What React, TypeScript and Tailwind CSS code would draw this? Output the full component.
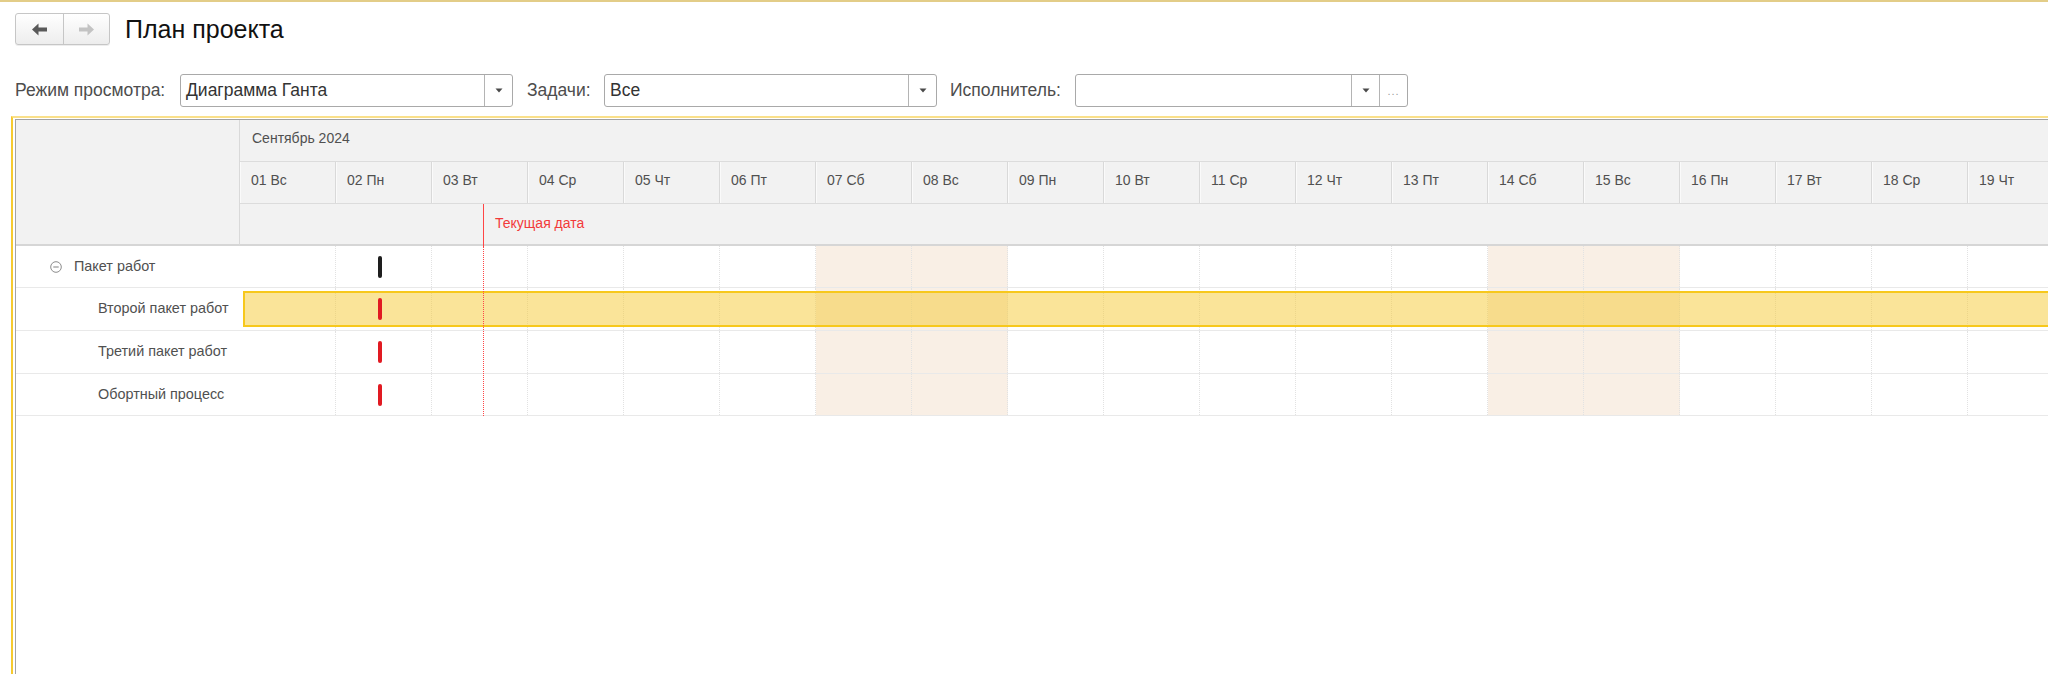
import React from "react";

type Day = { d: string; w: string; off?: boolean };

const days: Day[] = [
  { d: "01", w: "Вс" },
  { d: "02", w: "Пн" },
  { d: "03", w: "Вт" },
  { d: "04", w: "Ср" },
  { d: "05", w: "Чт" },
  { d: "06", w: "Пт" },
  { d: "07", w: "Сб", off: true },
  { d: "08", w: "Вс", off: true },
  { d: "09", w: "Пн" },
  { d: "10", w: "Вт" },
  { d: "11", w: "Ср" },
  { d: "12", w: "Чт" },
  { d: "13", w: "Пт" },
  { d: "14", w: "Сб", off: true },
  { d: "15", w: "Вс", off: true },
  { d: "16", w: "Пн" },
  { d: "17", w: "Вт" },
  { d: "18", w: "Ср" },
  { d: "19", w: "Чт" },
];

interface Row {
  name: string;
  height: string;
  mark: string;
  group?: boolean;
  selected?: boolean;
}

const rows: Row[] = [
  { name: "Пакет работ", height: "h-[42px]", mark: "bg-[#1e1e1e]", group: true },
  { name: "Второй пакет работ", height: "h-[43px]", mark: "bg-[#e11a22]", selected: true },
  { name: "Третий пакет работ", height: "h-[43px]", mark: "bg-[#e11a22]" },
  { name: "Обортный процесс", height: "h-[42px]", mark: "bg-[#e11a22]" },
];

function Caret() {
  return (
    <svg width="8" height="5" viewBox="0 0 8 5">
      <path d="M0.5 0.5h7L4 4.5z" fill="#4a4a4a" />
    </svg>
  );
}

function ArrowLeft({ color }: { color: string }) {
  return (
    <svg width="17" height="13" viewBox="0 0 17 13">
      <path d="M1 6.5L7.5 0.5v4h8.5v4H7.5v4z" fill={color} />
    </svg>
  );
}

function ArrowRight({ color }: { color: string }) {
  return (
    <svg width="17" height="13" viewBox="0 0 17 13">
      <path d="M16 6.5L9.5 0.5v4H1v4h8.5v4z" fill={color} />
    </svg>
  );
}

function CollapseIcon() {
  return (
    <svg width="12" height="12" viewBox="0 0 12 12">
      <circle cx="6" cy="6" r="5.3" fill="none" stroke="#8c8c8c" strokeWidth="1" />
      <path d="M3.3 6h5.4" stroke="#8c8c8c" strokeWidth="1.1" />
    </svg>
  );
}

function Select({ value, choose }: { value?: string; choose?: boolean }) {
  return (
    <div className="flex h-[33px] w-[333px] shrink-0 rounded-[3px] border border-[#a9a9a9] bg-white">
      <div className="flex flex-1 items-center overflow-hidden pl-[5px] text-[17.5px] text-[#333]">
        {value}
      </div>
      <button className="flex w-[28px] items-center justify-center border-l border-[#b4b4b4]">
        <Caret />
      </button>
      {choose && (
        <button className="flex w-[28px] items-end justify-center border-l border-[#b4b4b4] pb-[9px] text-[11px] leading-none tracking-[1px] text-[#9a9a9a]">
          ...
        </button>
      )}
    </div>
  );
}

export default function App() {
  return (
    <div className="flex h-screen w-full flex-col overflow-hidden bg-white font-['Liberation_Sans',Arial,sans-serif]">
      <div className="h-[2px] shrink-0 bg-[#e3cd88]" />

      {/* title bar */}
      <div className="flex shrink-0 items-center gap-[15px] pl-[15px] pt-[11px]">
        <div className="flex h-[32px] rounded-[3px] border border-[#c6c6c6] bg-gradient-to-b from-white to-[#ededed] shadow-[0_1px_0_rgba(0,0,0,0.07)]">
          <button className="flex w-[48px] items-center justify-center border-r border-[#c6c6c6]">
            <ArrowLeft color="#595959" />
          </button>
          <button className="flex w-[45px] items-center justify-center">
            <ArrowRight color="#c3c3c3" />
          </button>
        </div>
        <h1 className="text-[25px] leading-none text-[#111]">План проекта</h1>
      </div>

      {/* filters */}
      <div className="mt-[29px] flex h-[33px] shrink-0 items-center pl-[15px] text-[17.5px] text-[#4d4d4d]">
        <span className="w-[165px] shrink-0">Режим просмотра:</span>
        <Select value="Диаграмма Ганта" />
        <span className="ml-[14px] w-[77px] shrink-0">Задачи:</span>
        <Select value="Все" />
        <span className="ml-[13px] w-[125px] shrink-0">Исполнитель:</span>
        <Select choose />
      </div>

      {/* gantt */}
      <div className="ml-[11px] mt-[9px] flex min-h-0 flex-1 flex-col border-l-2 border-t-2 border-l-[#f6ca2f] border-t-[#fae08a] pl-[2px] pt-px">
        <div className="flex min-h-0 flex-1 overflow-hidden border-l border-t border-[#a3a3a3] text-[14px] text-[#505050]">
          {/* left panel */}
          <div className="w-[224px] shrink-0">
            <div className="h-[126px] border-b-2 border-r border-b-[#d6d6d6] border-r-[#d9d9d9] bg-[#f2f2f2]" />
            {rows.map((row) => (
              <div
                key={row.name}
                className={`${row.height} flex items-center border-b border-[#e9e9e9] text-[14.4px] ${row.group ? "pl-[34px]" : "pl-[82px]"}`}
              >
                {row.group && (
                  <span className="mr-[12px] flex">
                    <CollapseIcon />
                  </span>
                )}
                <span className="whitespace-nowrap">{row.name}</span>
              </div>
            ))}
          </div>

          {/* chart */}
          <div className="relative min-w-0 flex-1 overflow-hidden">
            <div className="h-[42px] border-b border-[#dcdcdc] bg-[#f2f2f2] pl-[12px] pt-[10px] leading-[16px]">
              Сентябрь 2024
            </div>
            <div className="flex h-[42px] border-b border-[#dcdcdc] bg-[#f2f2f2]">
              {days.map((day) => (
                <div
                  key={day.d}
                  className="h-full w-[96px] shrink-0 whitespace-nowrap border-r border-[#d9d9d9] pl-[11px] pt-[10px] leading-[16px] shadow-[inset_1px_0_0_#fafafa]"
                >
                  {day.d} {day.w}
                </div>
              ))}
            </div>
            <div className="h-[42px] border-b-2 border-[#d6d6d6] bg-[#f2f2f2] pl-[255px] pt-[11px] leading-[16px] text-[#f23a3a]">
              Текущая дата
            </div>

            {rows.map((row) => (
              <div key={row.name} className={`${row.height} relative flex border-b border-[#e9e9e9]`}>
                {days.map((day, i) => (
                  <div
                    key={day.d}
                    className={`relative h-full w-[96px] shrink-0 border-r border-dotted border-[#e2e2e2] ${day.off ? "bg-[#f9efe5]" : "bg-white"}`}
                  >
                    {i === 1 && (
                      <div
                        className={`absolute left-[42px] top-1/2 z-10 h-[22px] w-[4px] -translate-y-1/2 rounded-[2px] ${row.mark}`}
                      />
                    )}
                  </div>
                ))}
                {row.selected && (
                  <div className="pointer-events-none absolute bottom-[3px] left-[3px] right-0 top-[3px] border-2 border-r-0 border-[#f7c81c] bg-[rgba(245,201,51,0.5)]" />
                )}
              </div>
            ))}

            {/* current date marker */}
            <div className="absolute left-[243px] top-[84px] z-20 h-[42px] w-px bg-[#ff4545]" />
            <div className="absolute left-[243px] top-[126px] z-20 h-[170px] border-l border-dotted border-[#ff4545]" />
          </div>
        </div>
      </div>
    </div>
  );
}
